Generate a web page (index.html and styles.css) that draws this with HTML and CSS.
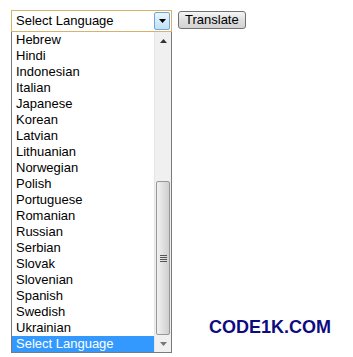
FILE: index.html
```html
<!DOCTYPE html>
<html lang="en">
<head>
    <meta charset="UTF-8">
    <meta name="viewport" content="width=device-width, initial-scale=1.0">
    <title>Translate</title>
    <link rel="stylesheet" href="styles.css">
</head>
<body>
    <div class="translator">
        <div class="translator__bar">
            <div class="picker">
                <span class="picker__value">Select Language</span>
                <span class="picker__arrow" aria-hidden="true">
                    <svg viewBox="0 0 7 4" width="7" height="4"><polygon points="0 0,7 0,3.5 4" fill="#000" /></svg>
                </span>
                <div class="menu">
                    <ul class="menu__list">
                        <li class="menu__item">Hebrew</li>
                        <li class="menu__item">Hindi</li>
                        <li class="menu__item">Indonesian</li>
                        <li class="menu__item">Italian</li>
                        <li class="menu__item">Japanese</li>
                        <li class="menu__item">Korean</li>
                        <li class="menu__item">Latvian</li>
                        <li class="menu__item">Lithuanian</li>
                        <li class="menu__item">Norwegian</li>
                        <li class="menu__item">Polish</li>
                        <li class="menu__item">Portuguese</li>
                        <li class="menu__item">Romanian</li>
                        <li class="menu__item">Russian</li>
                        <li class="menu__item">Serbian</li>
                        <li class="menu__item">Slovak</li>
                        <li class="menu__item">Slovenian</li>
                        <li class="menu__item">Spanish</li>
                        <li class="menu__item">Swedish</li>
                        <li class="menu__item">Ukrainian</li>
                        <li class="menu__item menu__item--active">Select Language</li>
                    </ul>
                    <div class="scroll">
                        <span class="scroll__btn">
                            <svg viewBox="0 0 7 4" width="7" height="4"><polygon points="0 4,7 4,3.5 0" fill="#333" /></svg>
                        </span>
                        <div class="scroll__track">
                            <div class="scroll__thumb">
                                <span class="scroll__grip"></span>
                            </div>
                        </div>
                        <span class="scroll__btn">
                            <svg viewBox="0 0 7 4" width="7" height="4"><polygon points="0 0,7 0,3.5 4" fill="#777" /></svg>
                        </span>
                    </div>
                </div>
            </div>
            <button class="translator__button" type="button">Translate</button>
        </div>
        <div class="brand">CODE1K.COM</div>
    </div>
</body>
</html>
```
FILE: styles.css
```css
* {
    box-sizing: border-box;
    margin: 0;
    padding: 0;
}
body {
    background-color: #fff;
    color: #000;
    font: 13px/16px "Liberation Sans", Arial, sans-serif;
    min-height: 100vh;
}
.translator {
    min-height: 100vh;
    padding: 10px 0 0 11px;
}
.translator__bar {
    display: flex;
    align-items: flex-start;
    gap: 6px;
}
.picker {
    position: relative;
    display: flex;
    align-items: center;
    width: 161px;
    height: 22px;
    border: 1px solid #d6b26e;
    background-color: #fff;
    padding-left: 4px;
}
.picker__value {
    flex: 1;
}
.picker__arrow {
    display: flex;
    align-items: center;
    justify-content: center;
    width: 16px;
    height: 18px;
    margin-right: 1px;
    border: 1px solid #6fa7d6;
    border-radius: 2px;
    background: linear-gradient(#e9f5fd, #bfe1f7);
}
.menu {
    position: absolute;
    top: 21px;
    left: -1px;
    display: flex;
    width: 161px;
    height: 321px;
    border: 1px solid #7a7a7a;
    border-top: 0;
    background-color: #fff;
}
.menu__list {
    flex: 1;
    list-style: none;
}
.menu__item {
    height: 16px;
    padding-left: 4px;
    white-space: nowrap;
}
.menu__item--active {
    background-color: #3399ff;
    color: #fff;
}
.scroll {
    display: flex;
    flex-direction: column;
    width: 17px;
    background-color: #f0f0f0;
    border-left: 1px solid #e6e6e6;
}
.scroll__btn {
    display: flex;
    align-items: center;
    justify-content: center;
    height: 17px;
}
.scroll__track {
    flex: 1;
    display: flex;
    flex-direction: column;
    justify-content: flex-end;
}
.scroll__thumb {
    display: flex;
    align-items: center;
    justify-content: center;
    height: 154px;
    margin: 0 1px;
    border: 1px solid #979797;
    border-radius: 2px;
    background: linear-gradient(90deg, #f2f2f2, #e0e0e0 50%, #cfcfcf);
}
.scroll__grip {
    display: block;
    width: 7px;
    height: 7px;
    background: repeating-linear-gradient(#555 0 1px, transparent 1px 2px);
}
.translator__button {
    height: 18px;
    margin-top: 1px;
    padding: 0 6px;
    border: 1px solid #707070;
    border-radius: 3px;
    background: linear-gradient(#f6f6f6, #dedede 50%, #d2d2d2);
    color: #000;
    font: 13px/16px "Liberation Sans", Arial, sans-serif;
}
.brand {
    padding: 286px 0 0 198px;
    color: #0c0c80;
    font: bold 18px/1 "Liberation Sans", Arial, sans-serif;
}
```
